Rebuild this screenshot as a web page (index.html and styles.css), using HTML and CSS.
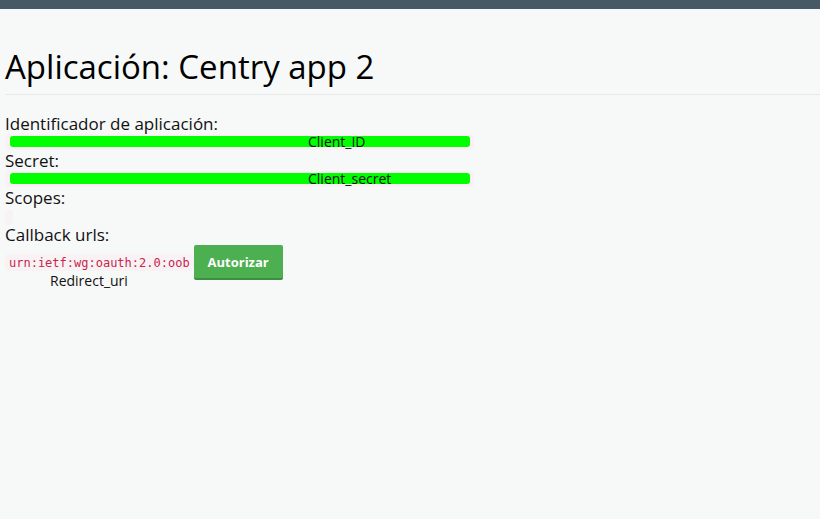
FILE: index.html
```html
<!DOCTYPE html>
<html lang="es">
<head>
<meta charset="utf-8">
<title>Aplicación: Centry app 2</title>
<link rel="stylesheet" href="styles.css">
</head>
<body>
<div class="topbar"></div>
<main class="page">
  <h1 class="title">Aplicación: Centry app 2</h1>
  <div class="field">
    <div class="label">Identificador de aplicación:</div>
    <div class="value"><code class="code"><span class="redact"><span class="redact-text">Client_ID</span></span></code></div>
  </div>
  <div class="field">
    <div class="label">Secret:</div>
    <div class="value"><code class="code"><span class="redact"><span class="redact-text">Client_secret</span></span></code></div>
  </div>
  <div class="field">
    <div class="label">Scopes:</div>
    <div class="value"><code class="code code-empty"></code></div>
  </div>
  <div class="field">
    <div class="label">Callback urls:</div>
    <div class="callback-row">
      <code class="code">urn:ietf:wg:oauth:2.0:oob</code>
      <button class="btn" type="button">Autorizar</button>
    </div>
    <div class="note">Redirect_uri</div>
  </div>
</main>
</body>
</html>
```
FILE: styles.css
```css
html, body {
  margin: 0;
  padding: 0;
  background: #f7f8f8;
}
body {
  font-family: "Open Sans", "Liberation Sans", sans-serif;
  font-size: 17px;
  color: #111;
}
.topbar {
  height: 9px;
  background: #455a64;
}
.page {
  padding-left: 5px;
}
.title {
  margin: 35px 0 0;
  padding-bottom: 5px;
  font-size: 33px;
  line-height: 45px;
  font-weight: 400;
  color: #000;
  border-bottom: 1px solid #e8e9e9;
}
.title + .field {
  margin-top: 19px;
}
.label {
  height: 20px;
  line-height: 20px;
  font-size: 17px;
}
.value {
  height: 17px;
}
.code {
  display: inline-block;
  box-sizing: border-box;
  height: 16px;
  padding: 2px 4px;
  font-family: "DejaVu Sans Mono", monospace;
  font-size: 12px;
  line-height: 12px;
  color: #c7254e;
  background: #f9f2f4;
  border-radius: 4px;
  vertical-align: top;
}
.code-empty {
  width: 8px;
  height: 15px;
  margin-top: 2px;
}
.redact {
  display: block;
  width: 460px;
  height: 11px;
  margin-left: 1px;
  background: #00ff00;
  border-radius: 3px;
}
.redact-text {
  display: block;
  padding-left: 298px;
  font-family: "Open Sans", sans-serif;
  font-size: 14px;
  line-height: 11px;
  color: #111;
}
.callback-row {
  display: flex;
  align-items: center;
  height: 35px;
}
.callback-row .code {
  height: 17px;
  padding-top: 3px;
}
.btn {
  box-sizing: border-box;
  width: 89px;
  height: 35px;
  padding: 0;
  border: none;
  border-bottom: 2px solid #3e8e41;
  border-radius: 2px;
  background: #4caf50;
  color: #fff;
  font-family: "Open Sans", sans-serif;
  font-weight: 700;
  font-size: 13px;
}
.note {
  margin-top: -9px;
  padding-left: 45px;
  font-size: 14px;
  line-height: 20px;
  color: #111;
}
```
